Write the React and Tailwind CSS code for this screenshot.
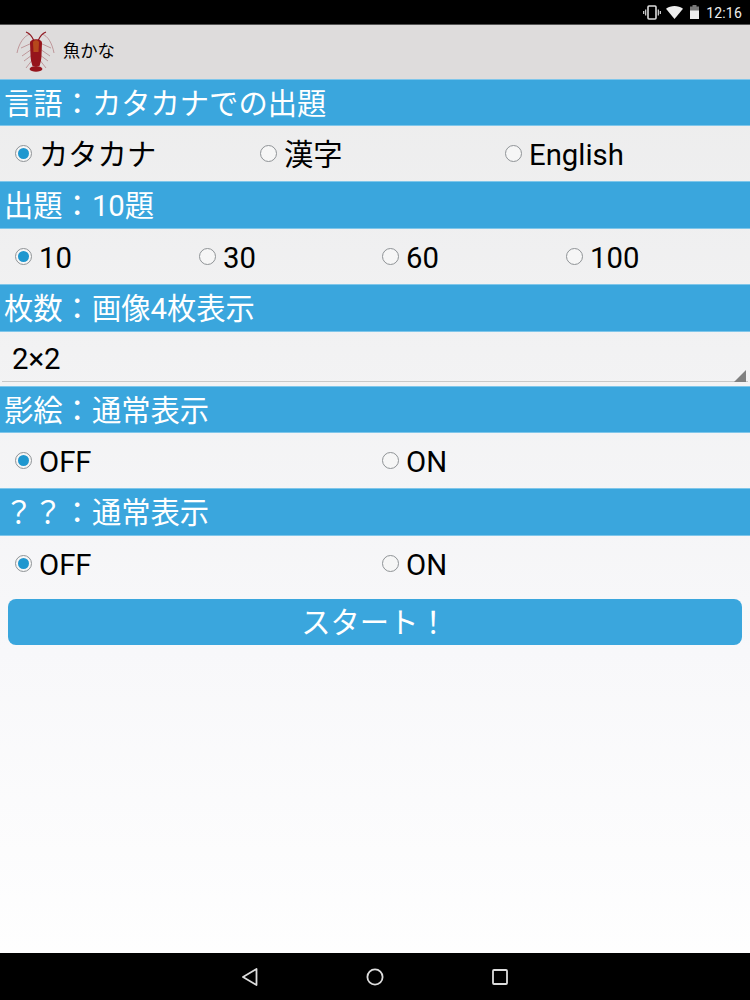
import React from 'react';

const font = { fontFamily: '"Roboto", "Noto Sans CJK JP", sans-serif' };

function Radio({ label, checked }) {
  return (
    <div className="flex items-center">
      <div className="w-[17px] h-[17px] rounded-full border border-[#8f9396] bg-[#f6f6f6] flex items-center justify-center shrink-0 -translate-y-[2px]">
        {checked && <div className="w-[11px] h-[11px] rounded-full bg-[#1f97cf]" />}
      </div>
      <span className="ml-[7px] text-[29.3px] leading-none text-black">{label}</span>
    </div>
  );
}

function Header({ text, h = 'h-[47px]' }) {
  return (
    <div className={`${h} bg-[#3aa6dd] border-y border-[#7fc6ea] flex items-center pl-[4px] pt-[4px] text-[29.3px] leading-none text-white`}>
      {text}
    </div>
  );
}

function Options({ items, cols }) {
  return (
    <div className={`h-[55px] pl-[15px] pt-[4px] grid items-center ${cols}`}>
      {items.map((o, i) => <Radio key={o} label={o} checked={i === 0} />)}
    </div>
  );
}

function Lobster() {
  return (
    <svg width="40" height="42" viewBox="0 0 40 42" fill="none" className="shrink-0">
      <g stroke="#b0787c" strokeWidth="0.7">
        <path d="M14 3 C8 5 3 12 1 22" />
        <path d="M26 3 C32 5 36 12 38 22" />
        <path d="M16 12 L5 17 M16 18 L6 25 M16 24 L8 30 M17 28 L10 37" />
        <path d="M24 12 L35 17 M24 18 L34 25 M24 24 L32 30 M23 28 L30 37" />
      </g>
      <g stroke="#8f1820" strokeWidth="1.3">
        <path d="M18 10 C16 5 13 2 10 1 M22 10 C24 5 27 2 30 1" />
      </g>
      <path d="M14 12 C14 7 26 7 26 12 L25.5 24 C25.5 28 24.5 32 23.5 35 L16.5 35 C15.5 32 14.5 28 14.5 24 Z" fill="#96141b" />
      <path d="M17 11 C18 8.5 22 8.5 23 11 L22.5 21 L17.5 21 Z" fill="#b5481c" />
      <path d="M13.5 38 C14.5 34 25.5 34 26.5 38 C25.5 41.5 14.5 41.5 13.5 38 Z" fill="#96141b" />
    </svg>
  );
}

export default function App() {
  return (
    <div style={font} className="w-[750px] h-[1000px] flex flex-col overflow-hidden bg-gradient-to-b from-[#ebebeb] via-[#f8f8fa] via-65% to-white">
      {/* status bar */}
      <div className="h-[25px] bg-black border-b border-[#555] flex items-center justify-end shrink-0 pr-[8px] text-white">
        <svg width="18" height="15" viewBox="0 0 18 15" fill="none" stroke="#ddd" className="mr-[5px]">
          <rect x="5" y="1" width="8" height="13" rx="1" strokeWidth="1.6" />
          <path d="M2.7 4.5v6M15.3 4.5v6M0.7 6v3M17.3 6v3" strokeWidth="1.2" />
        </svg>
        <svg width="17" height="13" viewBox="0 0 17 13" className="mr-[6px]">
          <path d="M0 2.8 C4.8 -0.9 12.2 -0.9 17 2.8 L8.5 13 Z" fill="#eee" />
        </svg>
        <svg width="11" height="14" viewBox="0 0 11 14" className="mr-[6px]">
          <path d="M3.5 0h4v1.5h2.5V14H1V1.5h2.5Z" fill="#777" />
          <path d="M1 5.5h9V14H1Z" fill="#eee" />
        </svg>
        <span className="text-[14px] leading-none text-[#eee] tracking-[0.2px] pt-[1px]">12:16</span>
      </div>

      {/* action bar */}
      <div className="h-[54px] bg-[#dedcdc] flex items-center pl-[16px] shrink-0">
        <Lobster />
        <span className="ml-[7px] text-[17.3px] leading-none text-black">魚かな</span>
      </div>

      <Header text="言語：カタカナでの出題" />
      <Options items={['カタカナ', '漢字', 'English']} cols="grid-cols-[245px_245px_1fr]" />
      <Header text="出題：10題" h="h-[48px]" />
      <Options items={['10', '30', '60', '100']} cols="grid-cols-[184px_183px_184px_1fr]" />
      <Header text="枚数：画像4枚表示" h="h-[48px]" />

      <div className="h-[54px] relative px-[2px]">
        <div className="h-[50px] border-b border-[#c8c8c8] flex items-center pl-[10px] pt-[6px] text-[29.3px] leading-none text-black">2×2</div>
        <div className="absolute right-[4px] top-[38px] w-0 h-0 border-l-[12px] border-l-transparent border-b-[12px] border-b-[#808080]" />
      </div>

      <Header text="影絵：通常表示" />
      <Options items={['OFF', 'ON']} cols="grid-cols-[367px_1fr]" />
      <Header text="？？：通常表示" h="h-[48px]" />
      <Options items={['OFF', 'ON']} cols="grid-cols-[367px_1fr]" />

      <div className="px-[8px] pt-[8px] flex-1">
        <div className="h-[46px] rounded-[8px] bg-[#3aa6dd] flex items-center justify-center pt-[4px] pr-[1px] text-[29.3px] leading-none text-white">
          スタート！
        </div>
      </div>

      {/* nav bar */}
      <div className="h-[47px] bg-black flex items-center justify-center shrink-0 pr-[2px]">
        <div className="w-[267px] flex items-center justify-between">
          <svg width="18" height="20" viewBox="0 0 18 20" fill="none" stroke="#ddd" strokeWidth="1.8">
            <path d="M15.5 2 L2 10 L15.5 18 Z" strokeLinejoin="round" />
          </svg>
          <svg width="18" height="18" viewBox="0 0 18 18" fill="none" stroke="#ddd" strokeWidth="1.8">
            <circle cx="9" cy="9" r="7.6" />
          </svg>
          <svg width="16" height="16" viewBox="0 0 16 16" fill="none" stroke="#ddd" strokeWidth="1.8">
            <rect x="1" y="1" width="14" height="14" rx="1" />
          </svg>
        </div>
      </div>
    </div>
  );
}
